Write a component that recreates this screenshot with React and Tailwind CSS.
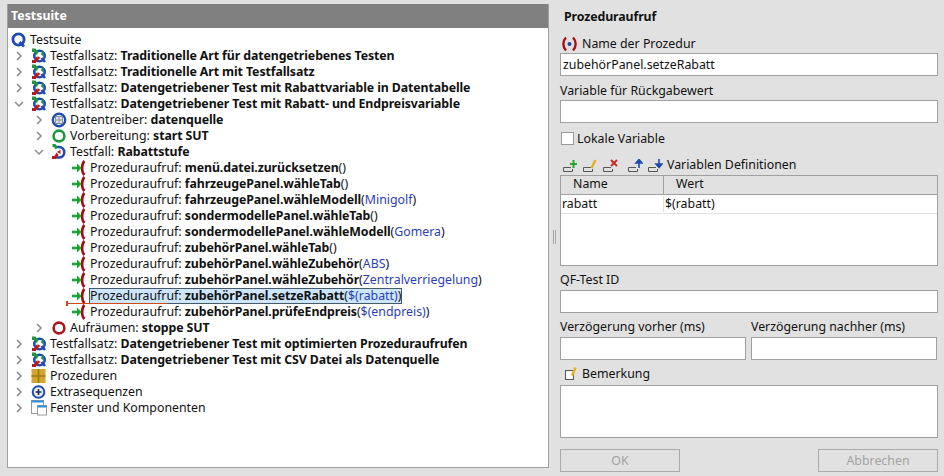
import React from "react";

const Chevron = ({ open }) => (
  <svg width="10" height="10" viewBox="0 0 10 10" className="shrink-0">
    <path d={open ? "M1 3l4 4 4-4" : "M3 1l4 4-4 4"} fill="none" stroke="#8a8a8a" strokeWidth="1.5" />
  </svg>
);

const SuiteIcon = () => (
  <svg width="16" height="16" viewBox="0 0 16 16" className="shrink-0">
    <circle cx="7.500" cy="7.500" r="5.600" fill="none" stroke="#1f4bb0" strokeWidth="2.800" />
    <path d="M8.500 10l4.500 4.500" stroke="#1f4bb0" strokeWidth="2.800" />
  </svg>
);

const SetIcon = () => (
  <svg width="16" height="16" viewBox="0 0 16 16" className="shrink-0">
    <circle cx="8.500" cy="8" r="5.200" fill="none" stroke="#1f4bb0" strokeWidth="2.600" />
    <path d="M10.500 10l3.500 4" stroke="#1f4bb0" strokeWidth="2.600" />
    <path d="M1 0.500h3.500L7.500 4.500 5.500 7 3.500 4H1z" fill="#1e9a3c" />
    <path d="M1 15h3.500L7.500 11 5.500 8.500 3.500 12H1z" fill="#b8141c" />
    <path d="M9.500 6l3-2.500v5z" fill="#1e9a3c" />
    <path d="M6.500 8l3 2-3 2z" fill="#b8141c" />
  </svg>
);

const DriverIcon = () => (
  <svg width="16" height="16" viewBox="0 0 16 16" className="shrink-0">
    <circle cx="8" cy="8" r="6.200" fill="none" stroke="#1f4bb0" strokeWidth="2.400" />
    <rect x="4.500" y="4.500" width="7" height="7" fill="#dfe6f2" stroke="#8a8fa0" />
    <path d="M8 4.500v7M4.500 8h7" stroke="#8a8fa0" />
  </svg>
);

const RingIcon = ({ color }) => (
  <svg width="16" height="16" viewBox="0 0 16 16" className="shrink-0">
    <circle cx="8" cy="8" r="5.400" fill="none" stroke={color} strokeWidth="2.600" />
  </svg>
);

const CaseIcon = () => (
  <svg width="16" height="16" viewBox="0 0 16 16" className="shrink-0">
    <path d="M5 3h3a5.200 5.200 0 0 1 0 10.500H3" fill="none" stroke="#1f4bb0" strokeWidth="2.600" />
    <path d="M1.500 0h3l2 3.500-2 2L3 3H1.500z" fill="#1e9a3c" />
    <path d="M1 15h3.500L7.500 11 5.500 8.500 3.500 12H1z" fill="#b8141c" />
    <path d="M6 8l3.500-2v4z" fill="#b8141c" />
  </svg>
);

const CallIcon = () => (
  <svg width="16" height="16" viewBox="0 0 16 16" className="shrink-0">
    <path d="M1 8h6" stroke="#17a63a" strokeWidth="2.600" />
    <path d="M6 3.500l4.500 4.500-4.500 4.500z" fill="#17a63a" />
    <path d="M13.500 1C10.300 4 10.300 12 13.500 15" fill="none" stroke="#a80f14" strokeWidth="2.600" />
  </svg>
);

const ProcIcon = () => (
  <svg width="16" height="16" viewBox="0 0 16 16" className="shrink-0">
    <rect x="0.500" y="1" width="14" height="14" fill="#d2a52c" />
    <path d="M7.500 1v14M0.500 8h14" stroke="#9c7a1c" strokeWidth="1.600" />
  </svg>
);

const ExtraIcon = () => (
  <svg width="16" height="16" viewBox="0 0 16 16" className="shrink-0">
    <circle cx="7.500" cy="8" r="5.800" fill="#e8edf8" stroke="#1f4bb0" strokeWidth="2" />
    <path d="M4.500 8h6M7.500 5v6" stroke="#1b2a55" strokeWidth="1.600" />
  </svg>
);

const WindowIcon = () => (
  <svg width="16" height="16" viewBox="0 0 16 16" className="shrink-0">
    <rect x="0.500" y="0.500" width="12" height="13" fill="#fff" stroke="#9a9a9a" />
    <rect x="0.500" y="0.500" width="12" height="2" fill="#2f8fe0" />
    <rect x="6.500" y="5.500" width="9" height="9.500" fill="#fff" stroke="#9a9a9a" />
    <rect x="6.500" y="5.500" width="9" height="2" fill="#2f8fe0" />
  </svg>
);

const icons = {
  suite: <SuiteIcon />,
  set: <SetIcon />,
  driver: <DriverIcon />,
  setup: <RingIcon color="#1e9a3c" />,
  cleanup: <RingIcon color="#a81a1f" />,
  case: <CaseIcon />,
  call: <CallIcon />,
  proc: <ProcIcon />,
  extra: <ExtraIcon />,
  window: <WindowIcon />,
};

const rows = [
  { depth: 0, icon: "suite", label: "Testsuite" },
  { depth: 1, icon: "set", arrow: "closed", label: "Testfallsatz: ", bold: "Traditionelle Art für datengetriebenes Testen" },
  { depth: 1, icon: "set", arrow: "closed", label: "Testfallsatz: ", bold: "Traditionelle Art mit Testfallsatz" },
  { depth: 1, icon: "set", arrow: "closed", label: "Testfallsatz: ", bold: "Datengetriebener Test mit Rabattvariable in Datentabelle" },
  { depth: 1, icon: "set", arrow: "open", label: "Testfallsatz: ", bold: "Datengetriebener Test mit Rabatt- und Endpreisvariable" },
  { depth: 2, icon: "driver", arrow: "closed", label: "Datentreiber: ", bold: "datenquelle" },
  { depth: 2, icon: "setup", arrow: "closed", label: "Vorbereitung: ", bold: "start SUT" },
  { depth: 2, icon: "case", arrow: "open", label: "Testfall: ", bold: "Rabattstufe" },
  { depth: 3, icon: "call", label: "Prozeduraufruf: ", bold: "menü.datei.zurücksetzen", tail: "()" },
  { depth: 3, icon: "call", label: "Prozeduraufruf: ", bold: "fahrzeugePanel.wähleTab", tail: "()" },
  { depth: 3, icon: "call", label: "Prozeduraufruf: ", bold: "fahrzeugePanel.wähleModell", tail: "(", arg: "Minigolf", end: ")" },
  { depth: 3, icon: "call", label: "Prozeduraufruf: ", bold: "sondermodellePanel.wähleTab", tail: "()" },
  { depth: 3, icon: "call", label: "Prozeduraufruf: ", bold: "sondermodellePanel.wähleModell", tail: "(", arg: "Gomera", end: ")" },
  { depth: 3, icon: "call", label: "Prozeduraufruf: ", bold: "zubehörPanel.wähleTab", tail: "()" },
  { depth: 3, icon: "call", label: "Prozeduraufruf: ", bold: "zubehörPanel.wähleZubehör", tail: "(", arg: "ABS", end: ")" },
  { depth: 3, icon: "call", label: "Prozeduraufruf: ", bold: "zubehörPanel.wähleZubehör", tail: "(", arg: "Zentralverriegelung", end: ")" },
  { depth: 3, icon: "call", selected: true, label: "Prozeduraufruf: ", bold: "zubehörPanel.setzeRabatt", tail: "(", arg: "$(rabatt)", end: ")" },
  { depth: 3, icon: "call", label: "Prozeduraufruf: ", bold: "zubehörPanel.prüfeEndpreis", tail: "(", arg: "$(endpreis)", end: ")" },
  { depth: 2, icon: "cleanup", arrow: "closed", label: "Aufräumen: ", bold: "stoppe SUT" },
  { depth: 1, icon: "set", arrow: "closed", label: "Testfallsatz: ", bold: "Datengetriebener Test mit optimierten Prozeduraufrufen" },
  { depth: 1, icon: "set", arrow: "closed", label: "Testfallsatz: ", bold: "Datengetriebener Test mit CSV Datei als Datenquelle" },
  { depth: 1, icon: "proc", arrow: "closed", label: "Prozeduren" },
  { depth: 1, icon: "extra", arrow: "closed", label: "Extrasequenzen" },
  { depth: 1, icon: "window", arrow: "closed", label: "Fenster und Komponenten" },
];

const indents = ["pl-[3px]", "pl-[6px]", "pl-[26px]", "pl-[63px]"];

function TreeRow({ row }) {
  return (
    <div className={`relative flex h-4 items-center whitespace-nowrap ${indents[row.depth]}`}>
      {row.arrow && (
        <span className="mr-[7px] flex w-[10px] justify-center">
          <Chevron open={row.arrow === "open"} />
        </span>
      )}
      {icons[row.icon]}
      <span
        className={`ml-[2px] flex h-4 items-center px-px ${
          row.selected ? "bg-[#cde6fb] outline outline-1 -outline-offset-1 outline-[#44586e]" : ""
        }`}
      >
        <span className="whitespace-pre">{row.label}</span>
        {row.bold && <b className="font-bold tracking-[-0.1px] whitespace-pre">{row.bold}</b>}
        {row.tail}
        {row.arg && <span className="text-[#2b3fb5]">{row.arg}</span>}
        {row.end}
      </span>
      {row.selected && (
        <div className="absolute left-[59px] top-[15px] z-10 h-px w-[100px] bg-[#d2471c]">
          <div className="absolute -left-px -top-[2px] h-[5px] w-[2px] bg-[#d2471c]" />
        </div>
      )}
    </div>
  );
}

const Field = ({ className = "h-[23px]", children }) => (
  <div className={`flex items-center border border-[#a0a0a0] bg-white px-[2px] ${className}`}>{children}</div>
);

const ToolIcon = ({ children }) => (
  <svg width="15" height="13" viewBox="0 0 15 13" className="shrink-0">
    <path d="M8 8.500H0.500v4h9V10" fill="none" stroke="#555" />
    {children}
  </svg>
);

function Toolbar() {
  return (
    <div className="mt-[13px] flex h-[14px] items-center pl-[3px]">
      <ToolIcon>
        <path d="M10.500 1v8M7 5h7" stroke="#2aa52a" strokeWidth="2" />
      </ToolIcon>
      <span className="ml-[5px]">
        <ToolIcon>
          <path d="M8.500 9l4-8" stroke="#e2b01e" strokeWidth="2.400" />
        </ToolIcon>
      </span>
      <span className="ml-[5px]">
        <ToolIcon>
          <path d="M8 1l6 6M14 1L8 7" stroke="#c4261f" strokeWidth="1.800" />
        </ToolIcon>
      </span>
      <span className="ml-[10px]">
        <ToolIcon>
          <path d="M11 9V3M8 4l3-3.500 3 3.500z" stroke="#1f4bb0" fill="#1f4bb0" strokeWidth="1.600" />
        </ToolIcon>
      </span>
      <span className="ml-[5px]">
        <ToolIcon>
          <path d="M11 0v5M8 5l3 3.500 3-3.500z" stroke="#1f4bb0" fill="#1f4bb0" strokeWidth="1.600" />
        </ToolIcon>
      </span>
      <span className="ml-[4px]">Variablen Definitionen</span>
    </div>
  );
}

export default function App() {
  return (
    <div className="flex h-[476px] w-[944px] overflow-hidden bg-[#e1e1e1] text-[12.35px] leading-4 text-[#111] [font-family:'Noto_Sans',sans-serif]">
      <div className="mb-2 ml-[7px] mt-1 flex w-[542px] shrink-0 flex-col border border-t-0 border-[#a0a0a0] bg-white">
        <div className="flex h-6 shrink-0 items-center bg-[#808080] pl-[3px] font-bold text-white">Testsuite</div>
        <div className="pt-[4px]">
          {rows.map((row, i) => (
            <TreeRow key={i} row={row} />
          ))}
        </div>
      </div>

      <div className="flex w-[11px] shrink-0 items-center justify-center">
        <div className="mt-[-2px] flex gap-px">
          <div className="h-[14px] w-px bg-[#a8a8a8]" />
          <div className="h-[14px] w-px bg-[#a8a8a8]" />
        </div>
      </div>

      <div className="w-[378px] shrink-0 pt-[9px]">
        <div className="h-4 pl-[4px] font-bold tracking-[-0.1px]">Prozeduraufruf</div>
        <div className="mt-[11px] flex h-4 items-center">
          <svg width="16" height="16" viewBox="0 0 16 16" className="ml-[2px] mr-[4px] shrink-0">
            <path d="M4 1.500C0.500 5 0.500 11 4 14.500M11 1.500C14.500 5 14.500 11 11 14.500" fill="none" stroke="#a80f14" strokeWidth="2.400" />
            <circle cx="7.500" cy="8" r="2" fill="#2040a8" />
          </svg>
          Name der Prozedur
        </div>
        <Field className="mt-px h-[23px]">zubehörPanel.setzeRabatt</Field>
        <div className="mt-[7px] h-4">Variable für Rückgabewert</div>
        <Field className="mt-[1px] h-[23px]" />
        <div className="mt-[9px] flex h-[13px] items-center">
          <div className="ml-px h-[13px] w-[13px] border border-[#9a9a9a] bg-white" />
          <span className="ml-[3px]">Lokale Variable</span>
        </div>
        <Toolbar />
        <div className="mt-[3px] h-[91px] border border-[#a0a0a0] bg-white">
          <div className="flex h-[19px] border-b border-[#a0a0a0] bg-[#e1e1e1]">
            <div className="w-[103px] border-r border-[#a0a0a0] pl-[12px]">Name</div>
            <div className="pl-[12px]">Wert</div>
          </div>
          <div className="flex h-[19px] items-center border-b border-[#e1e1e1]">
            <div className="w-[103px] border-r border-[#e1e1e1] pl-px">rabatt</div>
            <div className="pl-px">$(rabatt)</div>
          </div>
        </div>
        <div className="mt-[6px] h-4">QF-Test ID</div>
        <Field className="mt-[2px] h-[23px]" />
        <div className="mt-[6px] flex h-4">
          <div className="w-[191px]">Verzögerung vorher (ms)</div>
          <div>Verzögerung nachher (ms)</div>
        </div>
        <div className="mt-[2px] flex gap-[5px] pr-px">
          <Field className="h-[23px] w-[186px]" />
          <Field className="h-[23px] w-[186px]" />
        </div>
        <div className="mt-[6px] flex h-4 items-center pl-[5px]">
          <svg width="12" height="14" viewBox="0 0 12 14" className="mr-[5px] shrink-0">
            <rect x="0.500" y="3.500" width="8" height="9" fill="#fff" stroke="#555" />
            <path d="M7 8.500l3.500-8" stroke="#e2b01e" strokeWidth="2.400" />
          </svg>
          Bemerkung
        </div>
        <Field className="mt-[3px] h-[53px]" />
        <div className="mt-[11px] flex justify-between">
          <button className="h-[23px] w-[120px] border border-[#ababab] text-[#a3a3a3]">OK</button>
          <button className="h-[23px] w-[120px] border border-[#ababab] text-[#a3a3a3]">Abbrechen</button>
        </div>
      </div>
    </div>
  );
}
